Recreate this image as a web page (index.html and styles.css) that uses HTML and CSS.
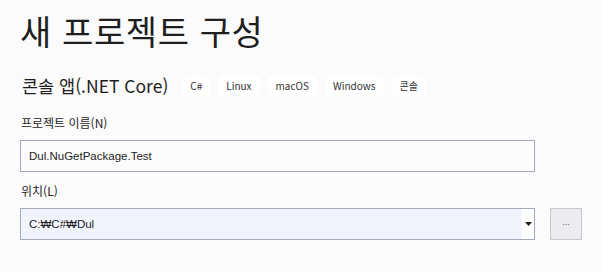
FILE: index.html
```html
<!DOCTYPE html>
<html lang="ko">
<head>
    <meta charset="UTF-8">
    <title>새 프로젝트 구성</title>
    <link rel="stylesheet" href="styles.css">
</head>
<body>
    <div class="page">
        <h1>새 프로젝트 구성</h1>
        <div class="template">
            <span class="template-name">콘솔 앱(.NET Core)</span>
            <ul class="tags">
                <li>C#</li>
                <li>Linux</li>
                <li>macOS</li>
                <li>Windows</li>
                <li>콘솔</li>
            </ul>
        </div>

        <div class="field">
            <label class="field-label">프로젝트 이름(N)</label>
            <div class="text-box">Dul.NuGetPackage.Test</div>
        </div>

        <div class="field">
            <label class="field-label">위치(L)</label>
            <div class="location-row">
                <div class="combo-box">
                    <span class="combo-text">C:&#8361;C#&#8361;Dul</span>
                    <span class="combo-arrow">
                        <svg width="7" height="4" viewBox="0 0 7 4"><path d="M0 0h7L3.5 4z" fill="#1e1e1e"/></svg>
                    </span>
                </div>
                <button class="browse-button">...</button>
            </div>
        </div>
    </div>
</body>
</html>
```

FILE: styles.css
```css
/* General */
body {
    margin: 0;
    background-color: #fbfbfb;
    font-family: 'Noto Sans CJK KR', 'Noto Sans', sans-serif;
    color: #1e1e1e;
}

.page {
    padding: 8px 0 0 20px;
}

h1 {
    margin: 0;
    font-size: 34px;
    font-weight: 400;
    line-height: 46px;
    letter-spacing: 0.6px;
}

/* Template line */
.template {
    display: flex;
    align-items: center;
    margin-top: 20px;
}

.template-name {
    font-size: 17.5px;
    line-height: 24px;
    margin-left: 2px;
}

.tags {
    display: flex;
    gap: 8px;
    list-style: none;
    margin: 0 0 0 14px;
    padding: 0;
}

.tags li {
    background-color: #fff;
    border-radius: 4px;
    padding: 0 8px;
    height: 20px;
    line-height: 20px;
    font-size: 10px;
    color: #333;
}

/* Fields */
.field {
    margin-top: 17px;
}

.field + .field {
    margin-top: 11px;
}

.field-label {
    display: block;
    font-size: 12px;
    line-height: 16px;
    margin: 0 0 9px 1px;
}

.text-box {
    width: 505px;
    height: 30px;
    border: 1px solid #a3acbc;
    background-color: #fcfcfc;
    padding-left: 8px;
    line-height: 30px;
    font-family: 'Liberation Sans', 'Noto Sans CJK KR', sans-serif;
    font-size: 11.5px;
}

.location-row {
    display: flex;
    gap: 15px;
}

.combo-box {
    display: flex;
    width: 513px;
    height: 30px;
    border: 1px solid #a3acbc;
    background-color: #f1f4fc;
}

.combo-text {
    flex: 1;
    padding-left: 8px;
    line-height: 30px;
    font-family: 'Liberation Sans', 'Noto Sans CJK KR', sans-serif;
    font-size: 11.5px;
}

.combo-arrow {
    width: 12px;
    display: flex;
    align-items: center;
    justify-content: center;
    background-color: #fff;
}

.browse-button {
    width: 32px;
    height: 32px;
    background-color: #ececf0;
    border: 1px solid #c8c8c8;
    padding: 0 0 4px;
    font-size: 9px;
    color: #555;
}
```
